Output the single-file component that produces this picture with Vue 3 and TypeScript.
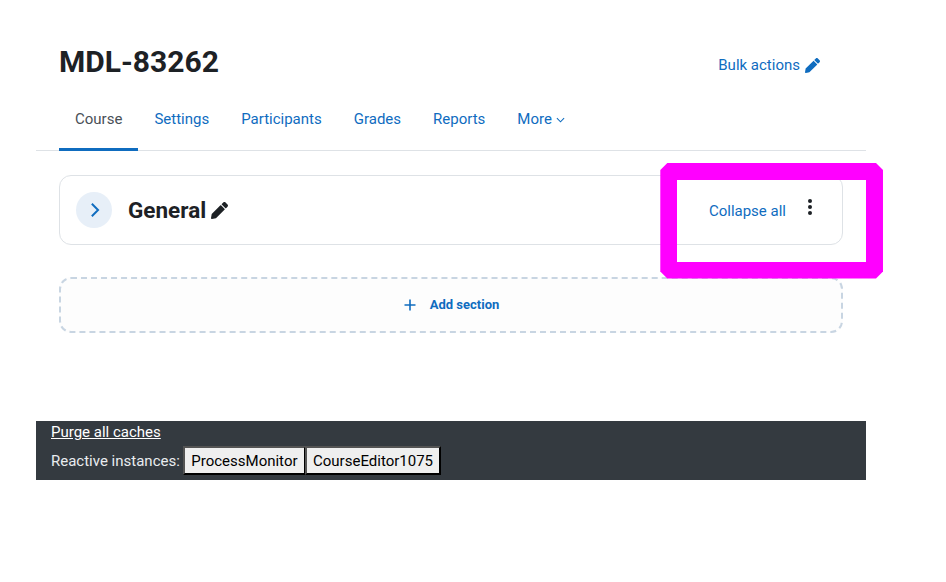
<script setup lang="ts">
const tabs = ['Course', 'Settings', 'Participants', 'Grades', 'Reports']
const instances = ['ProcessMonitor', 'CourseEditor1075']
const pencil = 'M497.9 142.1l-46.1 46.1c-4.7 4.7-12.3 4.7-17 0l-111-111c-4.7-4.7-4.7-12.3 0-17l46.1-46.1c18.7-18.7 49.1-18.7 67.9 0l60.1 60.1c18.8 18.7 18.8 49.1 0 67.9zM284.2 99.8L21.6 362.4.4 483.9c-2.9 16.4 11.4 30.6 27.8 27.8l121.5-21.3 262.6-262.6c4.7-4.7 4.7-12.3 0-17l-111-111c-4.8-4.7-12.4-4.7-17.1 0z'
</script>

<template>
  <div class="page">
    <header class="page-head">
      <h1>MDL-83262</h1>
      <a class="bulk">
        Bulk actions
        <svg class="pencil" viewBox="0 0 512 512"><path :d="pencil" /></svg>
      </a>
    </header>

    <nav class="tabs">
      <a v-for="(tab, i) in tabs" :key="tab" class="tab" :class="{ active: i === 0 }">{{ tab }}</a>
      <a class="tab more">
        More
        <svg class="caret" viewBox="0 0 10 6"><path d="M1 1l4 4 4-4" /></svg>
      </a>
    </nav>

    <main class="content">
      <section class="card">
        <span class="toggle">
          <svg viewBox="0 0 12 18"><path d="M3 2l7 7-7 7" /></svg>
        </span>
        <h2>General</h2>
        <svg class="pencil dark" viewBox="0 0 512 512"><path :d="pencil" /></svg>
        <a class="collapse">Collapse all</a>
        <span class="dots"><i></i><i></i><i></i></span>
      </section>

      <div class="add">
        <svg class="plus" viewBox="0 0 12 12"><path d="M6 .5v11M.5 6h11" /></svg>
        <span>Add section</span>
      </div>
    </main>

    <footer class="debug">
      <div><a class="purge">Purge all caches</a></div>
      <div class="reactive">
        Reactive instances:
        <button v-for="name in instances" :key="name" type="button">{{ name }}</button>
      </div>
    </footer>

    <div class="highlight"></div>
  </div>
</template>

<style>
html, body {
  margin: 0;
  background: #fff;
}
</style>

<style scoped>
.page {
  position: relative;
  box-sizing: border-box;
  width: 830px;
  height: 582px;
  margin-left: 36px;
  font-family: Roboto, "Liberation Sans", sans-serif;
  font-size: 15px;
  color: #1d2125;
}

.page-head {
  display: flex;
  align-items: center;
  justify-content: space-between;
  height: 87px;
  padding: 0 46px 0 23px;
}

h1 {
  margin: 37px 0 0;
  font-size: 30px;
  line-height: 50px;
  font-weight: 700;
}

.bulk {
  display: flex;
  align-items: center;
  gap: 5px;
  margin-top: 43px;
  font-size: 15px;
  color: #0f6cbf;
}

.pencil {
  width: 15px;
  height: 15px;
  fill: #0f6cbf;
}

.pencil.dark {
  width: 17px;
  height: 17px;
  margin-left: 5px;
  fill: #1d2125;
}

.tabs {
  display: flex;
  height: 64px;
  padding-left: 23px;
  box-sizing: border-box;
  border-bottom: 1px solid #dee2e6;
}

.tab {
  display: flex;
  align-items: center;
  gap: 4px;
  height: 64px;
  box-sizing: border-box;
  padding: 0 16px 1px;
  color: #0f6cbf;
}

.tab.active {
  color: #495057;
  border-bottom: 3px solid #0f6cbf;
  padding-top: 2px;
  padding-bottom: 0;
}

.caret {
  width: 9px;
  height: 6px;
  margin-top: 2px;
  fill: none;
  stroke: #0f6cbf;
  stroke-width: 1.2;
}

.content {
  padding: 24px 23px 0;
}

.card {
  display: flex;
  align-items: center;
  box-sizing: border-box;
  height: 70px;
  padding: 0 25px 0 16px;
  border: 1px solid #dee2e6;
  border-radius: 12px;
}

.toggle {
  display: flex;
  align-items: center;
  justify-content: center;
  width: 36px;
  height: 36px;
  border-radius: 50%;
  background: #e7eff8;
}

.toggle svg {
  width: 11px;
  height: 16px;
  fill: none;
  stroke: #0f6cbf;
  stroke-width: 2.2;
}

h2 {
  margin: 0 0 0 16px;
  font-size: 22.5px;
  font-weight: 700;
}

.collapse {
  margin: 2px 0 0 auto;
  font-size: 15px;
  color: #0f6cbf;
}

.dots {
  display: flex;
  flex-direction: column;
  gap: 2px;
  margin: -6px 5px 0 22px;
}

.dots i {
  width: 4px;
  height: 4px;
  border-radius: 50%;
  background: #1d2125;
}

.add {
  display: flex;
  align-items: center;
  justify-content: center;
  gap: 14px;
  box-sizing: border-box;
  height: 56px;
  margin-top: 32px;
  padding: 0 0 1px 1px;
  border: 2px dashed #c8d5e2;
  border-radius: 12px;
  background: #fdfdfd;
  font-size: 13px;
  font-weight: 700;
  color: #0f6cbf;
}

.plus {
  width: 12px;
  height: 12px;
  fill: none;
  stroke: #0f6cbf;
  stroke-width: 1.6;
}

.debug {
  box-sizing: border-box;
  height: 59px;
  margin-top: 88px;
  padding: 2px 15px 0;
  background: #343a40;
  color: #e9ecef;
  line-height: 18px;
}

.purge {
  color: #fff;
  text-decoration: underline;
}

.reactive {
  margin-top: 5px;
}

button {
  height: 29px;
  padding: 0 6px;
  margin: 0 -0.25px;
  border: 2px outset #000;
  background: #efefef;
  color: #000;
  font: inherit;
}

/* review marker lying over the card */
.highlight {
  position: absolute;
  left: 624.3px;
  top: 163px;
  box-sizing: border-box;
  width: 222.7px;
  height: 115.5px;
  border: 17px solid #ff00ff;
  clip-path: polygon(7px 0, calc(100% - 7px) 0, 100% 7px, 100% calc(100% - 7px), calc(100% - 7px) 100%, 7px 100%, 0 calc(100% - 7px), 0 7px);
}
</style>
